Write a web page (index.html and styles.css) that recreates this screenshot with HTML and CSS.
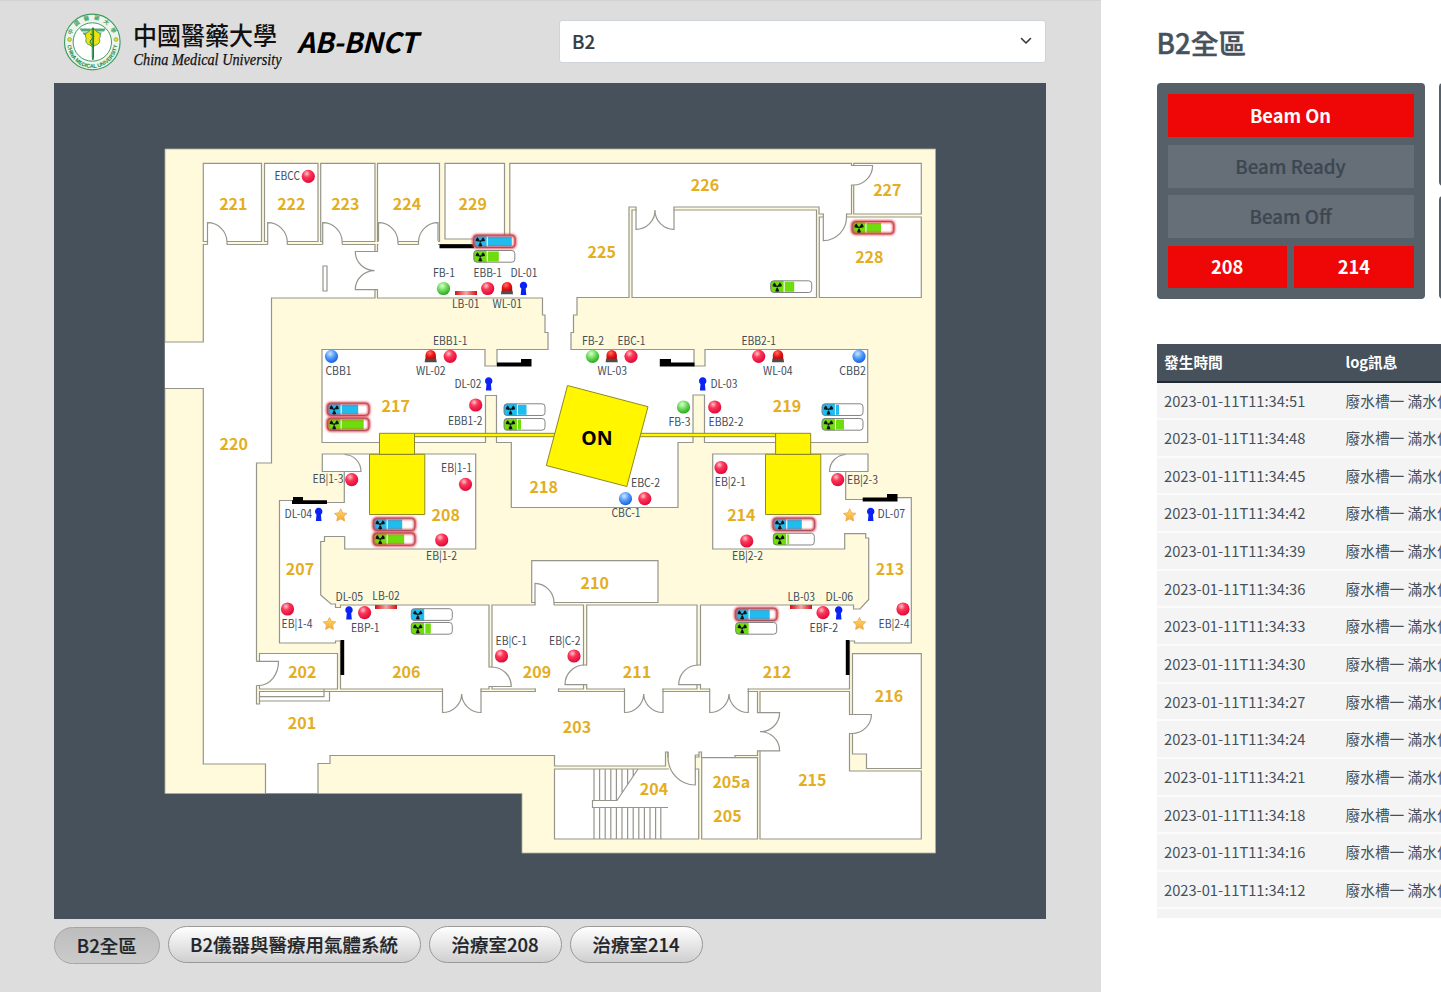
FILE: index.html
```html
<!DOCTYPE html>
<html lang="zh-Hant">
<head>
<meta charset="utf-8">
<title>AB-BNCT</title>
<link rel="stylesheet" href="styles.css">
</head>
<body>
<div class="app">
<main class="left">
<header class="top">
<svg class="logo" viewBox="62 12 224 62" width="224" height="62">
<circle cx="92.3" cy="42" r="27.8" fill="#eef5ee" stroke="#3f9d62" stroke-width="1.2"/>
<circle cx="92.3" cy="42" r="19.2" fill="#fff" stroke="#3f9d62" stroke-width="1"/>
<path id="ringTopArc" d="M70.800 37a22 22 0 0 1 43 0" fill="none"/>
<path id="ringBottom" d="M67.300 43a25 25 0 0 0 50 0" fill="none"/>
<text class="seal-zh"><textPath href="#ringTopArc" startOffset="2" textLength="54">中國醫藥大學</textPath></text>
<text class="seal-en"><textPath href="#ringBottom" startOffset="2" textLength="74">CHINA MEDICAL UNIVERSITY</textPath></text>
<circle cx="69.500" cy="39.500" r="2" fill="#e8d820" stroke="#3f9d62" stroke-width=".5"/>
<circle cx="116" cy="39.500" r="2" fill="#e8d820" stroke="#3f9d62" stroke-width=".5"/>
<path d="M79.500 28.500h11v3H81.500zM94 28.500h12l-2 3H94zM82.500 32.500H89l-2.500 2.500H84zM96 32.500h6l-2 2.500h-2z" fill="#55a878"/>
<path d="M92.800 29c-3 0-3 3-5.500 3.500-2.500 1-2 4-1 6-1.500 3 .5 6 3.500 6.500l3 2 3-2c3-.5 5-3.500 3.500-6.500 1.500-2 1.500-5-1-6-2.500-.5-2.500-3.500-5.500-3.500z" fill="#f0e010" stroke="#2a8a4a" stroke-width=".8"/>
<path d="M92.200 28h1.400l-.1 29-.6 3-.6-3zM90 34q6 2 3 4t-3 4 3 3" fill="none" stroke="#16803c" stroke-width="1"/>
<text class="logo-zh" x="133" y="45" textLength="144" lengthAdjust="spacingAndGlyphs">中國醫藥大學</text>
<text class="logo-en" x="133.500" y="65" textLength="148" lengthAdjust="spacingAndGlyphs">China Medical University</text>
</svg>
<h1 class="brand">AB-BNCT</h1>
<div class="select"><span>B2</span><svg width="12" height="12" viewBox="0 0 12 12"><path d="M1.500 3.500 6 8l4.500-4.500" fill="none" stroke="#343a40" stroke-width="1.600" stroke-linecap="round" stroke-linejoin="round"/></svg></div>
</header>
<svg class="map" viewBox="54 83 992 835.500">
<defs>
<radialGradient id="gr" cx=".38" cy=".3" r=".7"><stop offset="0" stop-color="#ffc4ce"/><stop offset=".4" stop-color="#fb3858"/><stop offset="1" stop-color="#e0083a"/></radialGradient>
<radialGradient id="gg" cx=".4" cy=".3" r=".7"><stop offset="0" stop-color="#dcffd4"/><stop offset=".5" stop-color="#6fdc5c"/><stop offset="1" stop-color="#2da523"/></radialGradient>
<radialGradient id="gb" cx=".4" cy=".3" r=".7"><stop offset="0" stop-color="#cfe6ff"/><stop offset=".5" stop-color="#519bfa"/><stop offset="1" stop-color="#1b62df"/></radialGradient>
<radialGradient id="gl" cx=".4" cy=".3" r=".8"><stop offset="0" stop-color="#ff7065"/><stop offset=".5" stop-color="#ec1010"/><stop offset="1" stop-color="#a80808"/></radialGradient>
<linearGradient id="gs" x1="0" y1="0" x2="0" y2="1"><stop offset="0" stop-color="#ffdc6c"/><stop offset="1" stop-color="#f4a832"/></linearGradient>
<linearGradient id="gbar"><stop offset="0" stop-color="#d40d16"/><stop offset=".5" stop-color="#f3aaa8"/><stop offset="1" stop-color="#d40d16"/></linearGradient>
<filter id="glow" x="-20%" y="-50%" width="140%" height="200%"><feGaussianBlur stdDeviation=".8"/></filter>
<circle id="red" r="6.600" fill="url(#gr)"/>
<circle id="green" r="6.600" fill="url(#gg)"/>
<circle id="blue" r="6.600" fill="url(#gb)"/>
<g id="lamp"><path d="M-5.200 4v-4.500a5.200 5.500 0 0 1 10.400 0V4z" fill="url(#gl)"/><path d="M-5.500 2.800h11l.6 3.500H-6.100z" fill="#54494b"/></g>
<path id="key" d="M-2.200 0a3.700 3.700 0 1 1 4.400 0L2.800 6.500h-5.600z" fill="#0b22f5"/>
<path id="star" d="M0-6.200 1.900-2.200 6.300-1.600 3.100 1.500 3.900 6 0 3.900-3.900 6-3.100 1.500-6.300-1.600-1.900-2.200z" fill="url(#gs)" stroke="#e9a443" stroke-width=".7" stroke-linejoin="round"/>
<rect id="beam" width="22" height="4" fill="url(#gbar)"/>
<g id="rad"><circle cx="7" cy="6.300" r="1"/><path d="M5.800 6.600 2.300 5.900A4.600 4.600 0 0 1 4.400 2.300L6.300 5.200zM8.200 6.600l3.500-.7A4.600 4.600 0 0 0 9.600 2.300L7.700 5.200zM6.300 7.600 5 10.900a4.600 4.600 0 0 0 4 0L7.700 7.600z"/></g>
<rect id="box" x=".5" y=".5" width="41" height="11.700" rx="3" fill="#fff"/>
<path id="tank" d="M13.400.5H3.500a3 3 0 0 0-3 3v5.700a3 3 0 0 0 3 3h9.900z"/>
<g id="ok"><rect x=".5" y=".5" width="41" height="11.700" rx="3" fill="none" stroke="#777" stroke-width=".9"/><use href="#rad"/></g>
<g id="alarm"><rect x=".2" y=".2" width="41.600" height="12.300" rx="3.500" fill="none" stroke="#e83c48" stroke-width="2.600" filter="url(#glow)"/><rect x=".2" y=".2" width="41.600" height="12.300" rx="3.500" fill="none" stroke="#a8505a" stroke-width="1"/><use href="#rad"/></g>
</defs>
<path class="ground" d="M165 149H935.500V853H522V793.500H165z"/>
<g class="room">
<path d="M165 342H203.300V244.500H375V298H271.500V463H256.500V704H259.500V691.500H757.500V755.500H735V757.500H701.500V752H699V757H668V752H665.500V766H554.500V755.500H330V763.500H318V793.500H265.500V764H203.300V388.500H165"/>
<path d="M203.300 163.300H261.500V241.500H203.300zM264.500 163.300H318V241.500H264.500zM320.700 163.300H375V241.500H320.700zM377.500 163.300H439.500V241.500H377.500zM445 163.300H504.500V239H445z"/>
<path d="M377.500 244.500V298H542.500V315H545V332.500H548V349.500H497V366H485V349.500H322V442.500H485.500V395.500H496.500V442.500H511.300V507.500H678V442.500H693V395H704.500V442.500H867.700V349.500H705V366H694V349.500H571V332.500H573.500V315H577V297.500H629V207H819V214H851.500V163.300H509.800V244.500z"/>
<path d="M632 210H816.500V297.500H632zM853.700 163.300H921.300V214H853.700zM819.300 217H921.300V297.500H819.300zM323 266H327V291H323z"/>
<path d="M322.300 454H475.700V549H344.700V536.500H324.500V541.500H320.700V595L331 604H335.500V607.500H340.500V605H489V689H340.500V641H335.500V643H279.500V500.500H300V502.500H344.300V471.500H322.300z"/>
<path d="M712.700 454H868V471.500H845.700V499.500H890V497.700H911.300V643H854.500V641H849.500V689H700.500V605H853.500V609H860L868.700 599.500V538H865.700V533.700H844.700V549H712.700z"/>
<path d="M531.700 560.700H658V602.500H531.700zM492 605H583.500V689H492zM586.700 605H697V689H586.700zM259.500 653.500H337.500V689H259.500zM760 691.500H849.500V771H921.300V839H760zM852.500 653.700H921.300V768.500H866.500V754H852.500zM701.700 757.700H757.500V839H701.700zM554.500 769H698.700V839H554.500z"/>
</g>
<path class="gap" d="M207.500 240h19.500v6h-19.500zM267.700 240h19.500v6h-19.500zM322.700 240h19.500v6h-19.500zM378.500 240h19.500v6h-19.500zM418.500 240h19.500v6h-19.500zM373 252h6v37.500h-6zM636.500 205h37v7h-37zM850 166h5.500v19h-5.500zM823.500 212h23v7h-23zM255 661.500h6v24h-6zM535.500 601h18.500v6h-18.500zM487 667.500h6.500v18.500h-6.500zM582 665.500h6v18.500h-6zM695.500 665.500h6.500v18.500h-6.500zM535.500 687h22.500v6h-22.500zM443 687h37.500v6h-37.500zM625 687h37.500v6h-37.500zM710 687h37.500v6h-37.500zM756 713h6v38h-6zM848 715h6v18h-6zM668.800 755h26v16h-26z"/>
<g class="line">
<path d="M207.500 244.500V222.700A19.500 19.500 0 0 1 227 242v2.500M267.700 244.500V222.700A19.500 19.500 0 0 1 287.300 242v2.500M322.700 244.500V222.700A19.500 19.500 0 0 1 342.200 242v2.500M378.500 241V222.700A19.500 19.500 0 0 1 398 242v2.500M438 241V222.700A19.500 19.500 0 0 0 418.500 242v2.500"/>
<path d="M378 251.500H355.300A19.300 19 0 0 0 374.500 270.600A19.300 19 0 0 0 355.300 289.700H378"/>
<path d="M636 207V229.300A19 19 0 0 0 655 210A19 19 0 0 0 674 229.300V207"/>
<path d="M851 165.500H872.600A19.500 19.500 0 0 1 853 185H851M823.300 213.500V240.700A23.500 23.500 0 0 0 846.500 217V213.500"/>
<path d="M344.500 454.500A17 17 0 0 1 361 471.500H344M845.700 454.500A17 17 0 0 0 829.500 471.500H846"/>
<path d="M535 605V583.300A19.500 19.500 0 0 1 554 602.500V605"/>
<path d="M256.500 661.300H278.500A19.500 24 0 0 1 259 685.500H256.500M259.500 696.700H324V689M259.500 701H329.500V691.500"/>
<path d="M489 667H492A19.500 19.500 0 0 1 511.300 686.500H489M587 665H584.500A19.500 19.500 0 0 0 565 684.700H587M700.500 665H698A19.500 19.500 0 0 0 678.800 684.700H700.500M535.300 688.500V692M558.500 688.500V692"/>
<path d="M442.500 688.500V712.500A19.300 19 0 0 0 461.700 694A19.300 19 0 0 0 481 712.500V688.500M624.500 688.500V712.500A19.300 19 0 0 0 643.700 694A19.300 19 0 0 0 663 712.500V688.500M709.700 688.500V712.500A19.300 19 0 0 0 729 694A19.300 19 0 0 0 748.300 712.500V688.500"/>
<path d="M757 712.700H779.600A19.300 19 0 0 1 760 731.700A19.300 19 0 0 1 779.600 750.800H757M849 714.500H871.400A19.500 19 0 0 1 852 733.500H849"/>
<path d="M668 752V757A27 28 0 0 0 695.300 785V755H699"/>
<path d="M594 769V800.500M599.600 769V800.500M605.200 769V800.500M610.800 769V800.500M616.400 769V800.500M622 769V793M627.600 769V785M633.200 769V776M638 769L617 800.500H592.500V807.500H668M594 807.500V839M599.600 807.500V839M605.200 807.500V839M610.800 807.500V839M616.400 807.500V839M622 807.500V839M627.600 807.500V839M633.200 807.500V839M638.800 807.500V839M644.400 807.500V839M650 807.500V839M655.600 807.500V839M660.800 807.500V839"/>
</g>
<path d="M439.500 244.300H474V248.300H439.500zM497 362.500H521V359H531.500V366.500H497zM659.800 359H671V362.500H694.500V366.500H659.800zM292 500.300H293V497H303V500.300H327V504H292zM862.700 497.500H887V494H897.500V501.500H862.700zM340.500 640H344.200V675H340.500zM845.800 640H849.500V675H845.800z"/>
<g class="unit">
<path d="M414.500 433.300H775.500V436.700H414.500zM379.500 433.300H414.500V454.500H379.500zM369.500 454.300H424.800V514.500H369.500zM775.600 433.300H810.700V454.500H775.600zM765.500 454.300H820.800V514.500H765.500z"/>
<path d="M567.500 385.500 648 406.700 626.800 486.500 546.300 465.500z"/>
</g>
<text class="on" x="597" y="444.700">ON</text>
<g class="num">
<text x="233.300" y="209.500">221</text><text x="291.300" y="209.500">222</text><text x="345.300" y="209.500">223</text><text x="407" y="209.500">224</text><text x="472.700" y="209.500">229</text><text x="705" y="191">226</text><text x="887.300" y="195.500">227</text><text x="869.300" y="262.500">228</text><text x="601.700" y="258">225</text><text x="395.700" y="411.500">217</text><text x="787" y="411.500">219</text><text x="233.700" y="450">220</text><text x="543.700" y="493">218</text><text x="445.700" y="520.700">208</text><text x="741.300" y="520.700">214</text><text x="300" y="575">207</text><text x="890" y="575">213</text><text x="594.700" y="588.700">210</text><text x="302.300" y="678">202</text><text x="406.300" y="678">206</text><text x="537" y="678">209</text><text x="637" y="678">211</text><text x="777" y="678">212</text><text x="889" y="702">216</text><text x="302" y="729">201</text><text x="577" y="733">203</text><text x="812.300" y="785.500">215</text><text x="654" y="794.500">204</text><text x="731.300" y="788.300">205a</text><text x="727.500" y="822">205</text>
</g>
<g class="tag" transform="translate(0 -.6)">
<text x="274.500" y="181" textLength="25.500" lengthAdjust="spacingAndGlyphs">EBCC</text>
<text x="433" y="277.500" textLength="22" lengthAdjust="spacingAndGlyphs">FB-1</text>
<text x="473.500" y="277.500" textLength="28.500" lengthAdjust="spacingAndGlyphs">EBB-1</text>
<text x="510.500" y="277.500" textLength="27" lengthAdjust="spacingAndGlyphs">DL-01</text>
<text x="452" y="308.700" textLength="27.500" lengthAdjust="spacingAndGlyphs">LB-01</text>
<text x="492.500" y="308.700" textLength="29.500" lengthAdjust="spacingAndGlyphs">WL-01</text>
<text x="433" y="345.500" textLength="34.500" lengthAdjust="spacingAndGlyphs">EBB1-1</text>
<text x="582" y="345.500" textLength="22" lengthAdjust="spacingAndGlyphs">FB-2</text>
<text x="617.500" y="345.500" textLength="28" lengthAdjust="spacingAndGlyphs">EBC-1</text>
<text x="741.500" y="345.500" textLength="34.500" lengthAdjust="spacingAndGlyphs">EBB2-1</text>
<text x="325.500" y="376" textLength="26" lengthAdjust="spacingAndGlyphs">CBB1</text>
<text x="416" y="376" textLength="29.500" lengthAdjust="spacingAndGlyphs">WL-02</text>
<text x="597.500" y="376" textLength="29.500" lengthAdjust="spacingAndGlyphs">WL-03</text>
<text x="763" y="376" textLength="29.500" lengthAdjust="spacingAndGlyphs">WL-04</text>
<text x="839.300" y="376" textLength="26.500" lengthAdjust="spacingAndGlyphs">CBB2</text>
<text x="454.500" y="388.700" textLength="27" lengthAdjust="spacingAndGlyphs">DL-02</text>
<text x="710.500" y="388.700" textLength="27" lengthAdjust="spacingAndGlyphs">DL-03</text>
<text x="448" y="425.500" textLength="34.500" lengthAdjust="spacingAndGlyphs">EBB1-2</text>
<text x="668.500" y="426.300" textLength="22" lengthAdjust="spacingAndGlyphs">FB-3</text>
<text x="708.500" y="426.300" textLength="35" lengthAdjust="spacingAndGlyphs">EBB2-2</text>
<text x="312.500" y="484" textLength="31" lengthAdjust="spacingAndGlyphs">EB|1-3</text>
<text x="441" y="473" textLength="31" lengthAdjust="spacingAndGlyphs">EB|1-1</text>
<text x="426" y="560.500" textLength="31" lengthAdjust="spacingAndGlyphs">EB|1-2</text>
<text x="631" y="488" textLength="29" lengthAdjust="spacingAndGlyphs">EBC-2</text>
<text x="611.500" y="518" textLength="29" lengthAdjust="spacingAndGlyphs">CBC-1</text>
<text x="714.800" y="487" textLength="31" lengthAdjust="spacingAndGlyphs">EB|2-1</text>
<text x="732" y="560.500" textLength="31" lengthAdjust="spacingAndGlyphs">EB|2-2</text>
<text x="847" y="484.300" textLength="31" lengthAdjust="spacingAndGlyphs">EB|2-3</text>
<text x="877.500" y="519" textLength="27.500" lengthAdjust="spacingAndGlyphs">DL-07</text>
<text x="284.500" y="519" textLength="27.500" lengthAdjust="spacingAndGlyphs">DL-04</text>
<text x="335.500" y="601.700" textLength="27.500" lengthAdjust="spacingAndGlyphs">DL-05</text>
<text x="372.300" y="601" textLength="27.500" lengthAdjust="spacingAndGlyphs">LB-02</text>
<text x="787.500" y="601.700" textLength="27.500" lengthAdjust="spacingAndGlyphs">LB-03</text>
<text x="825.500" y="601.700" textLength="27.500" lengthAdjust="spacingAndGlyphs">DL-06</text>
<text x="281.500" y="628.500" textLength="31" lengthAdjust="spacingAndGlyphs">EB|1-4</text>
<text x="351" y="633" textLength="28.500" lengthAdjust="spacingAndGlyphs">EBP-1</text>
<text x="809.500" y="632.300" textLength="28.500" lengthAdjust="spacingAndGlyphs">EBF-2</text>
<text x="878.500" y="628.500" textLength="31" lengthAdjust="spacingAndGlyphs">EB|2-4</text>
<text x="495.500" y="646" textLength="31.500" lengthAdjust="spacingAndGlyphs">EB|C-1</text>
<text x="549" y="646" textLength="31.500" lengthAdjust="spacingAndGlyphs">EB|C-2</text>
</g>
<g>
<use href="#red" x="308.300" y="176.300"/><use href="#green" x="443.500" y="288.500"/><use href="#red" x="487.700" y="288.500"/><use href="#lamp" x="507" y="288"/><use href="#key" x="523.500" y="288.500"/><use href="#beam" x="455" y="291"/>
<use href="#blue" x="331.500" y="356.300"/><use href="#lamp" x="430.700" y="356"/><use href="#red" x="450.200" y="356.300"/><use href="#green" x="592.500" y="356.300"/><use href="#lamp" x="611.700" y="356"/><use href="#red" x="631" y="356.300"/><use href="#red" x="758.700" y="356.300"/><use href="#lamp" x="778" y="356"/><use href="#blue" x="859" y="356.300"/>
<use href="#key" x="488.700" y="384"/><use href="#key" x="702.700" y="384"/><use href="#red" x="475.700" y="405"/><use href="#green" x="683.500" y="407"/><use href="#red" x="714.700" y="407"/>
<use href="#red" x="351.700" y="479.700"/><use href="#red" x="465.500" y="484.300"/><use href="#red" x="441.700" y="540"/><use href="#blue" x="625.500" y="498.700"/><use href="#red" x="644.800" y="498.700"/><use href="#red" x="721" y="467.500"/><use href="#red" x="746.700" y="541"/><use href="#red" x="837.700" y="479.700"/>
<use href="#red" x="287.500" y="609"/><use href="#red" x="364.600" y="612.700"/><use href="#red" x="823" y="612.700"/><use href="#red" x="903" y="609"/><use href="#red" x="501.500" y="656"/><use href="#red" x="574" y="656"/>
<use href="#key" x="318.700" y="514.500"/><use href="#key" x="349" y="613"/><use href="#key" x="838.700" y="613"/><use href="#key" x="870.700" y="514.500"/>
<use href="#star" x="340.700" y="515"/><use href="#star" x="329.500" y="623.500"/><use href="#star" x="849.700" y="515"/><use href="#star" x="859.500" y="623.500"/>
<use href="#beam" x="375" y="605"/><use href="#beam" x="790" y="605"/>
</g>
<g class="gauges">
<g class="b" transform="translate(473.300 235)"><use href="#box"/><use href="#tank"/><rect x="14.500" y="1.500" width="24" height="10"/><use class="k" href="#alarm"/></g>
<g class="g" transform="translate(473.300 250)"><use href="#box"/><use href="#tank"/><rect x="14.500" y="1.500" width="11" height="10"/><use class="k" href="#ok"/></g>
<g class="g" transform="translate(852 221.300)"><use href="#box"/><use href="#tank"/><rect x="14.500" y="1.500" width="14.500" height="10"/><use class="k" href="#alarm"/></g>
<g class="g" transform="translate(770.200 280.300)"><use href="#box"/><use href="#tank"/><rect x="14.500" y="1.500" width="9.500" height="10"/><use class="k" href="#ok"/></g>
<g class="b" transform="translate(327.200 403)"><use href="#box"/><use href="#tank"/><rect x="14.500" y="1.500" width="16.500" height="10"/><use class="k" href="#alarm"/></g>
<g class="g" transform="translate(327.200 418)"><use href="#box"/><use href="#tank"/><rect x="14.500" y="1.500" width="22" height="10"/><use class="k" href="#alarm"/></g>
<g class="b" transform="translate(503.500 403.300)"><use href="#box"/><use href="#tank"/><rect x="14.500" y="1.500" width="8.500" height="10"/><use class="k" href="#ok"/></g>
<g class="g" transform="translate(503.500 418)"><use href="#box"/><use href="#tank"/><rect x="14.500" y="1.500" width="3" height="10"/><use class="k" href="#ok"/></g>
<g class="b" transform="translate(821.500 403.300)"><use href="#box"/><use href="#tank"/><rect x="14.500" y="1.500" width="3" height="10"/><use class="k" href="#ok"/></g>
<g class="g" transform="translate(821.500 418)"><use href="#box"/><use href="#tank"/><rect x="14.500" y="1.500" width="8" height="10"/><use class="k" href="#ok"/></g>
<g class="b" transform="translate(373.200 518)"><use href="#box"/><use href="#tank"/><rect x="14.500" y="1.500" width="14.500" height="10"/><use class="k" href="#alarm"/></g>
<g class="g" transform="translate(373.200 532.800)"><use href="#box"/><use href="#tank"/><rect x="14.500" y="1.500" width="16.500" height="10"/><use class="k" href="#alarm"/></g>
<g class="b" transform="translate(772.800 518)"><use href="#box"/><use href="#tank"/><rect x="14.500" y="1.500" width="14.500" height="10"/><use class="k" href="#alarm"/></g>
<g class="g" transform="translate(772.800 532.800)"><use href="#box"/><use href="#tank"/><rect x="14.500" y="1.500" width="1.500" height="10"/><use class="k" href="#ok"/></g>
<g class="b" transform="translate(410.800 608.200)"><use href="#box"/><use href="#tank"/><use class="k" href="#ok"/></g>
<g class="g" transform="translate(410.800 622)"><use href="#box"/><use href="#tank"/><rect x="14.500" y="1.500" width="5.500" height="10"/><use class="k" href="#ok"/></g>
<g class="b" transform="translate(735.200 608)"><use href="#box"/><use href="#tank"/><rect x="14.500" y="1.500" width="20" height="10"/><use class="k" href="#alarm"/></g>
<g class="g" transform="translate(735.200 622)"><use href="#box"/><use href="#tank"/><use class="k" href="#ok"/></g>
</g>
</svg>
<nav class="tabs">
<button class="tab active">B2全區</button><button class="tab wide">B2儀器與醫療用氣體系統</button><button class="tab">治療室208</button><button class="tab">治療室214</button>
</nav>
</main>
<aside class="right">
<h2 class="title">B2全區</h2>
<div class="cards">
<section class="card beam">
<div class="state on-state">Beam On</div><div class="state">Beam Ready</div><div class="state">Beam Off</div>
<div class="pair"><div class="state on-state">208</div><div class="state on-state">214</div></div>
</section>
<div class="stack"><div class="card"></div><div class="card"></div></div>
</div>
<div class="log">
<div class="row head"><span>發生時間</span><span>log訊息</span></div>
<div class="row"><span>2023-01-11T11:34:51</span><span>廢水槽一 滿水位</span></div>
<div class="row"><span>2023-01-11T11:34:48</span><span>廢水槽一 滿水位</span></div>
<div class="row"><span>2023-01-11T11:34:45</span><span>廢水槽一 滿水位</span></div>
<div class="row"><span>2023-01-11T11:34:42</span><span>廢水槽一 滿水位</span></div>
<div class="row"><span>2023-01-11T11:34:39</span><span>廢水槽一 滿水位</span></div>
<div class="row"><span>2023-01-11T11:34:36</span><span>廢水槽一 滿水位</span></div>
<div class="row"><span>2023-01-11T11:34:33</span><span>廢水槽一 滿水位</span></div>
<div class="row"><span>2023-01-11T11:34:30</span><span>廢水槽一 滿水位</span></div>
<div class="row"><span>2023-01-11T11:34:27</span><span>廢水槽一 滿水位</span></div>
<div class="row"><span>2023-01-11T11:34:24</span><span>廢水槽一 滿水位</span></div>
<div class="row"><span>2023-01-11T11:34:21</span><span>廢水槽一 滿水位</span></div>
<div class="row"><span>2023-01-11T11:34:18</span><span>廢水槽一 滿水位</span></div>
<div class="row"><span>2023-01-11T11:34:16</span><span>廢水槽一 滿水位</span></div>
<div class="row"><span>2023-01-11T11:34:12</span><span>廢水槽一 滿水位</span></div>
<div class="row"></div>
</div>
</aside>
</div>
</body>
</html>
```

FILE: styles.css
```css
* { box-sizing: border-box; }
body { margin: 0; font-family: "Noto Sans CJK TC", "Noto Sans", sans-serif; color: #46515b; }
.app { display: flex; width: 1441px; height: 992px; overflow: hidden; }
.left { flex: 0 0 1101px; padding: 0 55px 0 54px; background: #ddd; border-top: 1px solid #d3d3d3; }
.top { display: flex; height: 82px; align-items: flex-start; }
.logo { margin: 11px 0 0 8px; flex: none; }
.seal-zh { font-size: 5.5px; fill: #3f9d62; font-weight: bold; }
.seal-en { font: bold 5.5px "Liberation Sans", sans-serif; fill: #1f8a48; }
.logo-zh { font-family: "Noto Sans CJK TC", sans-serif; font-size: 25px; fill: #111; font-weight: 500; }
.logo-en { font: italic 16px "Liberation Serif", serif; fill: #111; stroke: #111; stroke-width: .25px; }
.brand { margin: 18px 0 0 11px; width: 262px; font-size: 28px; letter-spacing: -.4px; line-height: 44px; font-style: italic; font-weight: bold; color: #000; }
.select { display: flex; align-items: center; justify-content: space-between; width: 487px; height: 43px; margin-top: 19px; padding: 0 13px 2px 12px; background: #fff; border: 1px solid #ced4da; border-radius: 3px; font-size: 18.7px; font-weight: 500; color: #343d46; -webkit-text-stroke: .2px; }
.map { display: block; width: 992px; height: 835.5px; background: #46515b; }
.ground { fill: #fffadb; stroke: #b0ad9c; stroke-width: .8; }
.room path { fill: #fff; stroke: #96958b; stroke-width: 1.2; }
.gap { fill: #fff; }
.line { fill: none; stroke: #96958b; stroke-width: 1.2; }
.unit { fill: #fff600; stroke: #8d8a25; stroke-width: 1; }
.on { font: bold 19.5px "Noto Sans", sans-serif; fill: #000; text-anchor: middle; }
.num { font-size: 16px; font-weight: bold; fill: #e3ae22; text-anchor: middle; }
.tag { font-size: 11.2px; fill: #414c57; }
.b { fill: #1fbcf0; }
.g { fill: #6fdc0c; }
.k { fill: #111; }
.tabs { display: flex; gap: 8px; padding-top: 7px; align-items: flex-start; }
.tab { width: 133px; height: 37px; padding: 0; border: 1px solid #999; border-radius: 19px; background: linear-gradient(#fff, #cfcfcf); font: 500 18.5px "Noto Sans CJK TC", sans-serif; line-height: 33px; color: #212529; -webkit-text-stroke: .2px; white-space: nowrap; text-align: center; }
.tab.active { width: 105.5px; margin-top: 1px; background: linear-gradient(#bdbdbd, #cbcbcb); border-color: #a5a5a5; }
.tab.wide { width: 253px; }
.right { flex: 0 0 340px; padding-left: 55.5px; background: #fff; overflow: hidden; }
.title { margin: 0; height: 83px; padding-top: 21px; font-size: 27.7px; font-weight: 500; line-height: 42px; -webkit-text-stroke: .4px; }
.cards { display: flex; gap: 14.5px; width: 700px; height: 216px; }
.card { background: #566069; border-radius: 4px; }
.beam { width: 268px; padding: 11px; display: flex; flex-direction: column; gap: 7.3px; }
.state { flex: 1; display: flex; align-items: center; justify-content: center; padding-bottom: 1px; background: #666e78; color: #3c4751; font-size: 18.7px; font-weight: 500; line-height: 20px; -webkit-text-stroke: .2px; }
.on-state { background: #ef0606; color: #fff; font-weight: bold; font-size: 18.3px; -webkit-text-stroke: 0; }
.pair { flex: 1; display: flex; gap: 7.3px; }
.stack { flex: 1; display: flex; flex-direction: column; gap: 10px; }
.stack .card { flex: 1; }
.log { margin-top: 45px; height: 574px; width: 700px; overflow: hidden; }
.row { display: flex; height: 37.65px; line-height: 36px; padding-left: 7.5px; background: #f4f4f4; border-bottom: 2px solid #fbfbfb; font-size: 14.7px; white-space: nowrap; }
.row span:first-child { width: 181.5px; }
.head { height: 38.5px; line-height: 36px; background: #46515b; border-bottom: 2px solid #212a31; color: #fff; font-weight: bold; }
```
